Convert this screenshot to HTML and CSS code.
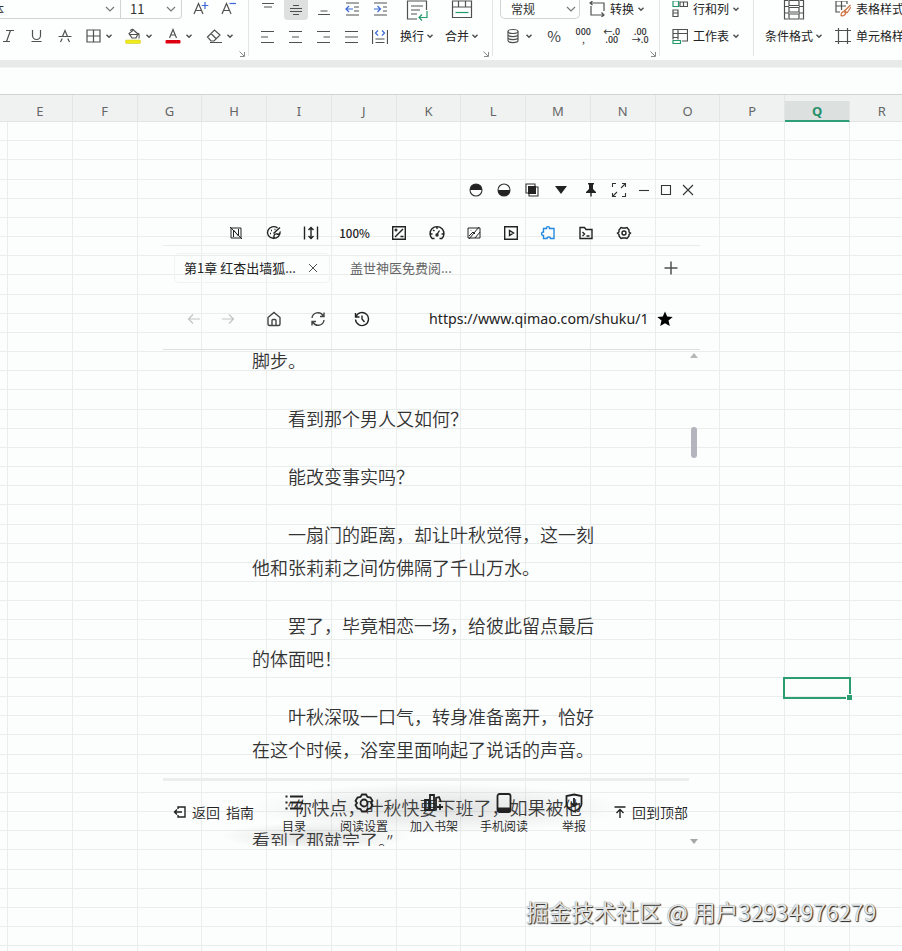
FILE: index.html
```html
<!DOCTYPE html>
<html lang="zh-CN">
<head>
    <meta charset="UTF-8">
    <title>表格</title>
    <link rel="stylesheet" href="styles.css">
</head>
<body>
    <svg class="defs" width="0" height="0">
        <symbol id="down" viewBox="0 0 8 8"><path d="M1.5 2.8 4 5.2 6.5 2.8" stroke-width="1.5"/></symbol>
        <symbol id="arrow" viewBox="0 0 10 8"><path d="M1 2l4 4 4-4"/></symbol>
        <symbol id="corner" viewBox="0 0 8 8"><path d="M1.5 1.5 6 6M6.5 2v4.5H2"/></symbol>
    </svg>

    <!-- 功能区 -->
    <div class="ribbon">
        <div class="group font">
            <div class="row">
                <div class="select name"><span>体</span><svg class="arrow"><use href="#arrow"/></svg></div>
                <div class="select size"><span>11</span><svg class="arrow"><use href="#arrow"/></svg></div>
                <svg class="icon letter" viewBox="0 0 16 16"><path d="M1 13 5.500 2.500 10 13M2.500 9.500h6"/><path class="blue" d="M12 1v7M8.800 4.500h6.500"/></svg>
                <svg class="icon letter" viewBox="0 0 16 16"><path d="M1 13 5.500 2.500 10 13M2.500 9.500h6"/><path class="blue" d="M8.500 2.500H15"/></svg>
            </div>
            <div class="row tools">
                <svg class="icon" viewBox="0 0 16 16"><path d="M6 2.500h8M3 13.500h7M10.500 2.500l-4 11"/></svg>
                <svg class="icon" viewBox="0 0 16 16"><path d="M4.500 2v5.500a4 4 0 0 0 8 0V2M3.500 13.500h10"/></svg>
                <svg class="icon" viewBox="0 0 16 16"><path d="M1.500 8.500h13M5.500 8.500l2.500-6 2.500 6M3.500 14l1.700-3.500M12.500 14l-1.700-3.500"/></svg>
                <div class="pair"><svg class="icon" viewBox="0 0 16 16"><path d="M2 2h13v12H2zM8.500 2v12M2 8h13"/></svg><svg class="down"><use href="#down"/></svg></div>
                <div class="pair"><svg class="icon" viewBox="0 0 16 16"><path d="M9 1.500 4 5.500l3 4.500h4l2-4-4-3.500M5 2.500 8 1M13.500 5c1 2 1 3 .5 5.500M4 6.500h8"/><rect class="yellow" x="0.500" y="12" width="15" height="3.500" rx="1"/></svg><svg class="down"><use href="#down"/></svg></div>
                <div class="pair"><svg class="icon" viewBox="0 0 16 16"><path d="M4.500 10 8 1.500l3.500 8.500M5.500 7h5"/><rect class="red" x="0.500" y="12" width="15" height="3.500" rx="1"/></svg><svg class="down"><use href="#down"/></svg></div>
                <div class="pair"><svg class="icon" viewBox="0 0 16 16"><path d="M1.500 9 8.500 2l5.500 5-6 6H5zM5 5.500l5.500 5.500M4 14.500h12"/></svg><svg class="down"><use href="#down"/></svg></div>
            </div>
            <svg class="corner"><use href="#corner"/></svg>
        </div>

        <div class="group align">
            <div class="aligns">
                <span><svg class="icon" viewBox="0 0 16 16"><path d="M2 1.500h12M4 5h8"/></svg></span>
                <span class="current"><svg class="icon" viewBox="0 0 16 16"><path d="M5 3.500h6M2 6.500h12M2 9.500h12M5 12.500h6"/></svg></span>
                <span><svg class="icon" viewBox="0 0 16 16"><path d="M4.500 9h7M2 12.500h12"/></svg></span>
                <span><svg class="icon" viewBox="0 0 16 16"><path d="M2 1h13M10 5h5M10 9h5M2 13h13"/><path class="blue" d="M9 7H2M5 4 2 7l3 3"/></svg></span>
                <span><svg class="icon" viewBox="0 0 16 16"><path d="M2 1h13M11 5h4M11 9h4M2 13h13"/><path class="blue" d="M2 7h6M5.500 4l3 3-3 3"/></svg></span>
                <span><svg class="icon" viewBox="0 0 16 16"><path d="M1 2.500h13M1 8h7M1 13.500h13"/></svg></span>
                <span><svg class="icon" viewBox="0 0 16 16"><path d="M1 2.500h13M4 8h7M1 13.500h13"/></svg></span>
                <span><svg class="icon" viewBox="0 0 16 16"><path d="M1 2.500h13M7.500 8H14M1 13.500h13"/></svg></span>
                <span><svg class="icon" viewBox="0 0 16 16"><path d="M1 2.500h13M1 8h13M1 13.500h13"/></svg></span>
                <span><svg class="icon" viewBox="0 0 16 16"><path d="M0.500 1v14M15.500 1v14M3.500 10h9M3.500 13.500h9"/><path class="blue" d="M6 1.500 3.500 4 6 6.500M10 1.500 12.500 4 10 6.500"/></svg></span>
            </div>
            <div class="big">
                <svg class="large" viewBox="0 0 22 22"><path d="M20.500 11V2h-19v18H11M5 7h12M5 11h9M5 15h6"/><path class="green" d="M21 12v6.500h-8M16 15.500l-3 3 3 3"/></svg>
                <div class="text">换行<svg class="down"><use href="#down"/></svg></div>
            </div>
            <div class="big">
                <svg class="large" viewBox="0 0 22 22"><path d="M1.500 2h19v16.500h-19zM1.500 8h19M7.500 2v6M14.500 2v6"/><path class="green" d="M4.500 13.500h13"/></svg>
                <div class="text">合并<svg class="down"><use href="#down"/></svg></div>
            </div>
            <svg class="corner"><use href="#corner"/></svg>
        </div>

        <div class="group number">
            <div class="row">
                <div class="select format"><span>常规</span><svg class="arrow"><use href="#arrow"/></svg></div>
                <div class="text"><svg class="icon" viewBox="0 0 16 16"><path d="M1 2h14v8M3.500 0 1 2l2.500 2M2 5v9h13M12.500 11.500 15 14l-2.500 2"/></svg><span>转换</span><svg class="down"><use href="#down"/></svg></div>
            </div>
            <div class="row formats">
                <div class="pair"><svg class="icon" viewBox="0 0 16 16"><ellipse cx="8" cy="3.500" rx="5" ry="2"/><path d="M3 3.500v9c0 2.700 10 2.700 10 0v-9M3 6.500c0 2.700 10 2.700 10 0M3 9.500c0 2.700 10 2.700 10 0"/></svg><svg class="down"><use href="#down"/></svg></div>
                <span class="percent">%</span>
                <span class="digits">000<br>,</span>
                <span class="digits">←.0<br>.00</span>
                <span class="digits">.00<br>→.0</span>
            </div>
            <svg class="corner"><use href="#corner"/></svg>
        </div>

        <div class="group cells">
            <div class="row text"><svg class="icon" viewBox="0 0 16 16"><path d="M8 1h7.500v4.500H8zM11.500 1v4.500M1 9h5v6.500H1zM1 12h5"/><path class="green" d="M1 0h5.500v5.500H1z"/></svg><span>行和列</span><svg class="down"><use href="#down"/></svg></div>
            <div class="row text"><svg class="icon" viewBox="0 0 16 16"><path d="M1 11.500v-10h14.500V13H10M1 5.500h14.500M6 1.500v10M1 9.500h5"/><path class="green" d="M1 12.500h7.500v3H1z"/></svg><span>工作表</span><svg class="down"><use href="#down"/></svg></div>
        </div>

        <div class="group styles">
            <div class="big">
                <svg class="large" viewBox="0 0 22 22"><path d="M5 1.500H1.500V20H5M17 1.500h3.500V20H17M6 1.500h10v5H6zM6 15h10v5H6zM6 8.500h10v4.500H6zM1.500 7.500H6M1.500 14H6M16 7.500h4.500M16 14h4.500"/></svg>
                <div class="text">条件格式<svg class="down"><use href="#down"/></svg></div>
            </div>
            <div>
                <div class="row text"><svg class="icon" viewBox="0 0 16 16"><path d="M5 11H1V0h11v3M1 5h10M6.500 0v9"/><path class="orange" d="M15.500 4 9.500 10M9 9l3 3M6 15c0-3 1.500-5 3.500-4s1 4-3.500 4M12 12l4-6"/></svg><span>表格样式</span></div>
                <div class="row text"><svg class="icon" viewBox="0 0 16 16"><path d="M3.500 0v16M12.500 0v16M0 2.500h16M0 13.500h16"/></svg><span>单元格样式</span></div>
            </div>
        </div>
    </div>

    <div class="formula"></div>

    <div class="heads">
        <span>E</span><span>F</span><span>G</span><span>H</span><span>I</span><span>J</span><span>K</span><span>L</span><span>M</span><span>N</span><span>O</span><span>P</span><span class="current">Q</span><span>R</span>
    </div>

    <div class="sheet">
        <div class="selected"></div>

        <!-- 浮动阅读窗口 -->
        <div class="reader">
            <div class="titlebar">
                <svg viewBox="0 0 16 16"><circle cx="8" cy="8" r="6"/><path class="solid" d="M2 8a6 6 0 0 1 12 0z"/></svg>
                <svg viewBox="0 0 16 16"><circle cx="8" cy="8" r="6"/><path class="solid" d="M2 8a6 6 0 0 0 12 0z"/></svg>
                <svg viewBox="0 0 16 16"><path d="M2 2h9v9H2zM5 5h9v9H5z"/><path class="solid" d="M4 4h8v8H4z"/></svg>
                <svg viewBox="0 0 16 16"><path class="solid" d="M2 4h12l-6 8z"/></svg>
                <svg viewBox="0 0 16 16"><path class="solid" d="M5 1h6v1l-1 1v4l3 3v1H8.700v3L8 15l-.7-1v-3H3v-1l3-3V3L5 2z"/></svg>
                <svg viewBox="0 0 16 16"><path d="M1.500 5V1.500H5M11 1.500h3.500V5M14.500 11v3.500H11M5 14.500H1.500V11M10 6l4.500-4.500M1.500 14.500 6 10"/></svg>
                <svg viewBox="0 0 16 16"><path d="M3 8.500h10"/></svg>
                <svg viewBox="0 0 16 16"><path d="M3.500 3.500h9v9h-9z"/></svg>
                <svg viewBox="0 0 16 16"><path d="M3 3l10 10M13 3 3 13"/></svg>
            </div>
            <div class="toolbar">
                <svg viewBox="0 0 16 16"><path class="thin" d="M3 3h10v10H3zM5.500 12V5l5 6V4M2 2l12 12"/></svg>
                <svg viewBox="0 0 16 16"><path d="M11.500 2.800A6.300 5.800 0 1 0 14 6.500c.5 2.500-1.500 3-3 2.500s-3 .5-3 2 0 2.500-1 2.500M7.500 8.500 14 2.500"/><path d="M4 8.500h1M5 5.500h1M8.500 4.500h1"/></svg>
                <svg viewBox="0 0 16 16"><path d="M1.500 1.500v13M14.500 1.500v13M8 2.500v11M5.500 5 8 2.500 10.500 5M5.500 11 8 13.500l2.500-2.500"/></svg>
                <span>100%</span>
                <svg viewBox="0 0 16 16"><path d="M1.700 1.700h12.600v12.600H1.700zM4 12l8-8M3.500 5h3M5 3.500v3M9.500 11.500h3"/></svg>
                <svg viewBox="0 0 16 16"><path d="M3.500 14a7 7 0 1 1 9 0M8 9.500l2.500-4M1.500 9h2M12.500 9h2M4 5l1.500 1M8 2v2M3.500 13.500h2M10.500 13.500h2"/><circle cx="8" cy="10" r="1"/></svg>
                <svg viewBox="0 0 16 16"><path class="thin" d="M2 3h12v10H2zM3 11l4-4 2 2M9 13l5-6M3 14 13 2M5 5v.5"/></svg>
                <svg viewBox="0 0 16 16"><path d="M1.700 1.700h12.600v12.600H1.700zM6.500 5.500v5L10.500 8z"/></svg>
                <svg class="sky" viewBox="0 0 16 16"><path d="M3.500 3.500h3C6 1 10 1 9.500 3.500H14v10h-3.500C10.500 11.500 7 11.500 7 13.500H3.500V10.500C1 11 1 6.500 3.500 7z"/></svg>
                <svg viewBox="0 0 16 16"><path d="M2 13.500v-11h4.500l1.500 2h6v9zM4.500 7l2 2-2 2M8.500 11h3"/></svg>
                <svg viewBox="0 0 16 16"><path d="M5 2.500 6.500 3h3L11 2.500 13 5v2l1.500 1L13 9.500V11l-2 2.500-1.500-.5h-3L5 13.500 3 11V9.500L1.500 8 3 7V5z"/><circle cx="8" cy="8" r="2"/></svg>
            </div>
            <div class="tabs">
                <div class="tab active"><span>第1章 红杏出墙狐...</span><svg class="close" viewBox="0 0 10 10"><path d="M1 1l8 8M9 1 1 9"/></svg></div>
                <div class="tab">盖世神医免费阅...</div>
                <svg class="plus" viewBox="0 0 14 14"><path d="M7 .500v13M.500 7h13"/></svg>
            </div>
            <div class="nav">
                <svg class="off" viewBox="0 0 16 16"><path d="M14 8H3M7 3.500 2.500 8 7 12.500"/></svg>
                <svg class="off" viewBox="0 0 16 16"><path d="M2 8h11M9 3.500 13.500 8 9 12.500"/></svg>
                <svg class="home" viewBox="0 0 16 16"><path d="M2 6.500 8 1.500l6 5V13q0 1.500-1.500 1.500h-9Q2 14.500 2 13zM6 14V9.500q0-1 1-1h2q1 0 1 1V14"/></svg>
                <svg class="home" viewBox="0 0 16 16"><path d="M2 7a6 6 0 0 1 11-2.500l1 1M14 1.500v4h-4M14 9a6 6 0 0 1-11 2.500l-1-1M2 14.500v-4h4"/></svg>
                <svg viewBox="0 0 16 16"><path d="M2 5.500a6.500 6.500 0 1 1-.5 3M1.500 2v4h4M8 4.500V8l2.500 3"/></svg>
                <span class="url">https://www.qimao.com/shuku/1</span>
                <svg class="star" viewBox="0 0 16 16"><path class="solid" d="M8 .500l2.200 5 5.500.5-4.200 3.600 1.300 5.400L8 12.200 3.200 15l1.300-5.400L.300 6l5.500-.5z"/></svg>
            </div>
            <div class="page">
                <div class="article">
                    <p class="rest">脚步。</p>
                    <p>看到那个男人又如何？</p>
                    <p>能改变事实吗？</p>
                    <p>一扇门的距离，却让叶秋觉得，这一刻他和张莉莉之间仿佛隔了千山万水。</p>
                    <p>罢了，毕竟相恋一场，给彼此留点最后的体面吧！</p>
                    <p>叶秋深吸一口气，转身准备离开，恰好在这个时候，浴室里面响起了说话的声音。</p>
                    <p><span class="quote">“</span>你快点，叶秋快要下班了，如果被他看到了那就完了。<span class="quote">”</span></p>
                </div>
                <div class="scroll">
                    <i class="up"></i>
                    <i class="thumb"></i>
                    <i class="bottom"></i>
                </div>
                <div class="footer">
                    <div class="back">
                        <svg viewBox="0 0 14 14"><path d="M5 4V2h7v10H5v-2M9 7H1.500M4 4.500 1.500 7 4 9.500"/></svg>
                        <span>返回</span><span>指南</span>
                    </div>
                    <div class="menu">
                        <div><svg viewBox="0 0 20 20"><path d="M6 3.500h13M6 9.500h13M6 15.500h13M1.500 3.500h2M1.500 9.500h2M1.500 15.500h2"/></svg>目录</div>
                        <div><svg viewBox="0 0 20 20"><path d="M8 1.500h4l1.500 2.500 3 .5 2 3.500-1.500 2 1.500 2-2 3.500-3 .5-1.500 2.500H8L6.500 16l-3-.5-2-3.500L3 10 1.500 8l2-3.500 3-.5z"/><circle cx="10" cy="10" r="3.500"/></svg>阅读设置</div>
                        <div><svg viewBox="0 0 20 20"><path d="M1 7h4v10H1zM6 2h4v15H6zM12 17V5l3-1 2 5M16 11v6M13 14h6"/></svg>加入书架</div>
                        <div><svg viewBox="0 0 20 20"><rect x="3.500" y="1" width="13" height="18" rx="2"/><path class="solid" d="M3.500 14.500h13v4.500h-13z"/></svg>手机阅读</div>
                        <div><svg viewBox="0 0 20 20"><path d="M10 1.500 17.500 3v8c0 4-4 6-7.500 7.500C6.500 17 2.500 15 2.500 11V3zM10 5v8M7 10l3 3 3-3"/></svg>举报</div>
                    </div>
                    <div class="top">
                        <svg viewBox="0 0 14 14"><path d="M1.500 2h11M7 13V5M3.500 8 7 4.500 10.500 8"/></svg>
                        <span>回到顶部</span>
                    </div>
                </div>
            </div>
        </div>

        <div class="watermark">掘金技术社区 @ 用户32934976279</div>
    </div>
</body>
</html>
```
FILE: styles.css
```css
*{
    padding: 0;
    margin: 0;
    box-sizing: border-box;
}
body{
    width: 902px;
    height: 951px;
    overflow: hidden;
    background-color: #fcfdfd;
    font-family: "Noto Sans CJK SC", sans-serif;
    color: #333;
}
svg{
    display: block;
    flex: none;
    fill: none;
    stroke: #505050;
    stroke-width: 1.2;
}
.defs{
    position: absolute;
}
.blue{
    stroke: #3b68d8;
}
.green{
    stroke: #269a6b;
}
.orange{
    stroke: #cf7442;
}
.yellow{
    fill: #f0ec1c;
    stroke: #c9c51c;
    stroke-width: .5;
}
.red{
    fill: #dc0010;
    stroke: none;
}
.solid{
    fill: #222;
    stroke: none;
}

/* 功能区 */
.ribbon{
    display: flex;
    height: 60px;
    background-color: #fdfefe;
    font-size: 12px;
    line-height: 18px;
}
.group{
    position: relative;
    flex: none;
    height: 56px;
    border-right: 1px solid #e3e5e5;
}
.icon{
    width: 16px;
    height: 16px;
}
.large{
    width: 22px;
    height: 22px;
}
.down{
    width: 8px;
    height: 8px;
}
.arrow{
    width: 10px;
    height: 8px;
    stroke: #777;
}
.corner{
    position: absolute;
    right: 2px;
    bottom: -2px;
    width: 8px;
    height: 8px;
    stroke: #888;
    stroke-width: 1;
}
.row{
    display: flex;
    align-items: center;
    height: 18px;
}
.row + .row{
    margin-top: 9px;
}
.pair{
    display: flex;
    align-items: center;
    gap: 4px;
}
.text{
    display: flex;
    align-items: center;
    color: #222;
    white-space: nowrap;
}
.select{
    display: flex;
    justify-content: space-between;
    align-items: center;
    height: 20px;
    padding-right: 5px;
    border: 1px solid #d2d4d4;
    border-top: 0;
    font-size: 13px;
}
.font{
    width: 249px;
}
.name{
    width: 121px;
    border-left: 0;
}
.name span{
    margin-left: -9px;
}
.size{
    width: 61px;
    padding-left: 9px;
    border-left: 0;
    border-radius: 0 0 4px 0;
}
.letter{
    margin-left: 11px;
    margin-right: 1px;
}
.tools{
    gap: 12.300px;
}
.align{
    display: flex;
    width: 244px;
    padding-left: 5px;
}
.aligns{
    display: grid;
    grid-template-columns: repeat(5, 28px);
    grid-template-rows: 20px 34px;
}
.aligns span{
    display: flex;
    justify-content: center;
    align-items: center;
}
.aligns .current{
    width: 24px;
    margin-left: 2px;
    background-color: #dedfdf;
    border-radius: 0 0 4px 4px;
}
.big{
    display: flex;
    flex-direction: column;
    align-items: center;
    width: 45px;
    gap: 6px;
}
.big .text{
    gap: 2px;
}
.big .large{
    margin-top: -1px;
}
.align .big{
    padding-left: 1px;
}
.number{
    width: 167px;
    padding-left: 7px;
}
.format{
    width: 80px;
    padding: 0 3px 0 10px;
    border-radius: 0 0 5px 5px;
    font-size: 12px;
}
.number .text{
    margin-left: 9px;
}
.text .icon{
    margin-right: 5px;
}
.text span{
    margin-right: 3px;
}
.formats .pair{
    margin-left: 5px;
}
.percent{
    width: 36px;
    text-align: center;
    font-size: 15px;
    font-weight: 350;
    margin-left: 3px;
}
.digits{
    flex: none;
    width: 28.500px;
    margin-left: -1px;
    margin-right: 1px;
    text-align: center;
    font-size: 9px;
    font-weight: 500;
    line-height: 8px;
}
.percent + .digits{
    margin-left: -3px;
}
.cells{
    width: 94px;
    padding-left: 12px;
}
.styles{
    display: flex;
    border-right: 0;
    padding-left: 10px;
}
.styles .big{
    width: 60px;
    margin-right: 11px;
}
.formula{
    height: 35px;
    border-top: 7px solid #e8e9e9;
    border-bottom: 1px solid #d0d3d3;
    background-color: #fcfdfd;
    box-shadow: inset 0 1px #f2f3f3;
}

/* 列标 */
.heads{
    display: flex;
    height: 27px;
    padding-left: 8px;
    background-color: #eff2f1;
    border-bottom: 1px solid #e0e4e2;
}
.heads span{
    flex: none;
    width: 64.770px;
    height: 27px;
    padding-top: 6px;
    border-right: 1px solid #e2e6e5;
    text-align: center;
    font-family: "Noto Sans", sans-serif;
    font-size: 13px;
    line-height: 21px;
    color: #666;
}
.heads .current{
    height: 21px;
    margin-top: 6px;
    padding-top: 0;
    border-bottom: 2px solid #2e9f76;
    background-color: #dce1df;
    color: #26906a;
    font-weight: bold;
}
.sheet{
    position: relative;
    height: 829px;
    background-image: repeating-linear-gradient(to right, #e9eeed 0, #e9eeed 1px, transparent 1px, transparent 64.770px),
        repeating-linear-gradient(to bottom, #e9eeed 0, #e9eeed 1px, transparent 1px, transparent 19.170px);
    background-position: 7px -1px;
    background-size: 1000px 900px;
}
.selected{
    position: absolute;
    left: 783px;
    top: 555px;
    width: 68px;
    height: 22px;
    border: 2px solid #2b9d70;
}
.selected::after{
    content: "";
    position: absolute;
    right: -3px;
    bottom: -3px;
    width: 5px;
    height: 5px;
    background-color: #2b9d70;
    border-left: 1px solid #fff;
    border-top: 1px solid #fff;
}

/* 阅读窗口 */
.reader{
    position: absolute;
    left: 163px;
    top: 48px;
    width: 537px;
    height: 676px;
}
.titlebar, .toolbar{
    display: grid;
    align-items: center;
    justify-items: center;
}
.titlebar{
    grid-template-columns: 28px 28px 28px 30px 30px 26px 24px 20px 23px;
    height: 40px;
    padding-left: 299px;
}
.titlebar svg{
    width: 16px;
    height: 16px;
    stroke: #333;
    stroke-width: 1.100;
}
.toolbar{
    grid-template-columns: 38px 37px 38px 49px 39px 38px 36px 37px 38px 38px 38px;
    height: 36px;
    padding-top: 10px;
    padding-left: 54px;
    border-bottom: 1px solid #e9eceb;
    font-size: 11.500px;
    font-weight: 500;
    color: #222;
}
.toolbar svg{
    width: 16px;
    height: 16px;
    stroke: #222;
    stroke-width: 1.400;
}
.toolbar .thin{
    stroke-width: 1;
}
.toolbar .sky{
    stroke: #2388df;
}
.tabs{
    display: flex;
    align-items: center;
    height: 43px;
    padding-left: 11px;
    font-size: 13px;
}
.tab{
    display: flex;
    align-items: center;
    height: 30px;
    color: #666;
    white-space: nowrap;
}
.active{
    width: 156px;
    margin-right: 20px;
    padding-left: 9px;
    border: 1px solid #f0f3f3;
    border-radius: 5px;
    color: #222;
}
.close{
    width: 10px;
    height: 10px;
    margin-left: 12px;
    stroke-width: 1;
}
.plus{
    width: 14px;
    height: 14px;
    margin-left: auto;
    margin-right: 22px;
    stroke-width: 1.500;
}
.nav{
    display: flex;
    align-items: center;
    height: 61px;
    border-bottom: 1px solid #dde0df;
    padding-left: 23px;
}
.nav svg{
    width: 16px;
    height: 16px;
    margin-right: 28px;
    stroke: #222;
    stroke-width: 1.400;
}
.nav .off{
    margin-right: 18px;
    stroke: #c2c4c4;
    stroke-width: 1.200;
}
.nav .off + .home{
    margin-left: 12px;
}
.nav .home{
    stroke: #444;
}
.nav .url{
    width: 221px;
    margin-left: 31px;
    margin-right: 7px;
    margin-top: -2px;
    font-family: "Noto Sans", sans-serif;
    font-size: 14.200px;
    color: #222;
    white-space: nowrap;
}
.nav .star{
    margin-right: 0;
}
.nav .star .solid{
    fill: #000;
}
.page{
    position: relative;
    height: 496px;
    overflow: hidden;
}
.article{
    width: 346px;
    margin-left: 89px;
    font-size: 18px;
    font-weight: 350;
    line-height: 32.600px;
    color: #333;
}
.article p{
    margin-bottom: 25.600px;
    text-indent: 2em;
}
.article .rest{
    margin-top: -6.200px;
    text-indent: 0;
}
.quote{
    font-family: "Noto Sans", sans-serif;
}
.scroll{
    position: absolute;
    right: 3px;
    top: 3px;
    width: 7px;
    height: 491px;
    display: flex;
    flex-direction: column;
    align-items: center;
}
.up, .bottom{
    border: 4px solid transparent;
}
.up{
    border-top: 0;
    border-bottom: 5px solid #b5b8b8;
}
.thumb{
    width: 6px;
    height: 31px;
    margin-top: 69px;
    border-radius: 3px;
    background-color: #b3b4bd;
}
.bottom{
    margin-top: auto;
    border-bottom: 0;
    border-top: 5px solid #a5a8a8;
}
/* 底部菜单盖在正文上面 */
.footer{
    position: absolute;
    left: 0;
    bottom: 0;
    display: flex;
    align-items: center;
    width: 526px;
    height: 68px;
    border-top: 3px solid #eceeee;
    background-image: radial-gradient(ellipse at 52% 42%, rgba(120,120,120,.22), transparent 48%),
        radial-gradient(ellipse at 29% 85%, rgba(120,120,120,.22), transparent 18%);
    font-size: 14px;
    font-weight: 350;
    color: #222;
}
.back, .top{
    display: flex;
    align-items: center;
    gap: 5px;
    margin-top: -3px;
}
.footer .back{
    width: 96px;
    padding-left: 10px;
}
.back svg, .top svg{
    width: 14px;
    height: 14px;
    stroke: #222;
    stroke-width: 1.400;
}
.back span + span{
    margin-left: 1px;
}
.menu{
    display: flex;
    width: 350px;
}
.menu div{
    display: flex;
    flex-direction: column;
    align-items: center;
    width: 70px;
    font-size: 12px;
    line-height: 18px;
    gap: 4px;
}
.menu svg{
    width: 20px;
    height: 20px;
    stroke: #222;
    stroke-width: 1.800;
}
.footer .top{
    margin-left: auto;
    margin-right: 1px;
}
.watermark{
    position: absolute;
    left: 526px;
    top: 774px;
    font-size: 22.600px;
    line-height: 32px;
    white-space: nowrap;
    color: #e4e6e6;
    text-shadow: 1px 1px 1px #222, 0 0 1px #777;
}
```
